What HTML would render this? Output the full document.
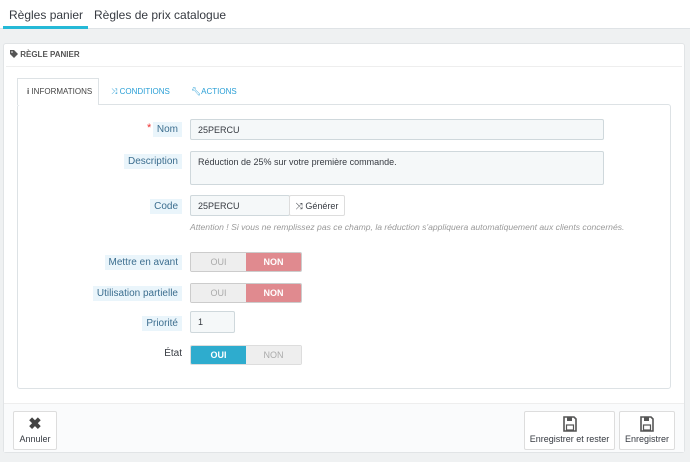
<!DOCTYPE html><html><head><meta charset="utf-8"><style>
*{box-sizing:border-box;margin:0;padding:0}
body{width:690px;height:462px;background:#eff1f2;font-family:"Liberation Sans",sans-serif;position:relative;overflow:hidden;color:#363a41}
.a{position:absolute}
.top{left:0;top:0;width:690px;height:29px;background:#fff;border-bottom:1px solid #dfe3e6}
.lbl{position:absolute;right:508px;font-size:10px;color:#3c6e8f;background:#eaf5fb;padding:2px 4px;white-space:nowrap}
.inp{position:absolute;background:#f5f8f9;border:1px solid #cfd8dc;border-radius:2px;font-size:9px;padding:5px 7px;color:#363a41}
.sw{position:absolute;left:190px;width:112px;height:20px;border:1px solid #ccc;border-radius:2px;display:flex;font-size:9px;overflow:hidden}
.sw span{flex:1;display:flex;align-items:center;justify-content:center}
.off{background:#eee;color:#aaa}
.non{background:#e08a8f;color:#fff;font-weight:bold}
.oui{background:#2eacce;color:#fff;font-weight:bold}
.btn{position:absolute;background:#fff;border:1px solid #ddd;border-radius:2px;font-size:9px;color:#363a41;text-align:center}
</style></head><body>
<div class="a top"></div>
<div class="a" style="left:9px;top:8px;font-size:12px">Règles panier</div>
<div class="a" style="left:3px;top:26px;width:85px;height:3px;background:#25b9d7"></div>
<div class="a" style="left:94px;top:8px;font-size:12px">Règles de prix catalogue</div>
<div class="a" style="left:3px;top:43px;width:682px;height:410px;background:#fff;border:1px solid #e1e4e6;border-radius:3px"></div>
<div class="a" style="left:10px;top:50px;font-size:8px;font-weight:bold;color:#555"><svg width="8" height="8" viewBox="0 0 8 8" style="vertical-align:-1px"><path d="M0 0h4l4 4-4 4-4-4z" fill="#555"/><circle cx="2" cy="2" r="0.8" fill="#fff"/></svg> RÈGLE PANIER</div>
<div class="a" style="left:6px;top:66px;width:676px;height:1px;background:#eee"></div>
<div class="a" style="left:17px;top:104px;width:654px;height:285px;border:1px solid #dde2e5;border-radius:3px"></div>
<div class="a" style="left:17px;top:78px;width:82px;height:27px;background:#fff;border:1px solid #dde2e5;border-bottom:none"></div>
<div class="a" style="left:27px;top:87px;font-size:8px;color:#444"><b>i</b> INFORMATIONS</div>
<div class="a" style="left:111px;top:87px;font-size:8px;color:#2a9fd6">⤨ CONDITIONS</div>
<div class="a" style="left:191px;top:87px;font-size:8px;color:#2a9fd6">🔧︎ACTIONS</div>
<div class="a" style="left:147px;top:122px;color:#e33;font-size:11px">*</div>
<div class="lbl" style="top:122px">Nom</div>
<div class="inp" style="left:190px;top:119px;width:414px;height:21px">25PERCU</div>
<div class="lbl" style="top:154px">Description</div>
<div class="inp" style="left:190px;top:151px;width:414px;height:34px">Réduction de 25% sur votre première commande.</div>
<div class="lbl" style="top:199px">Code</div>
<div class="inp" style="left:190px;top:195px;width:100px;height:21px">25PERCU</div>
<div class="btn" style="left:289px;top:195px;width:56px;height:21px;padding-top:5px">⤨ Générer</div>
<div class="a" style="left:190px;top:222px;font-size:8.6px;font-style:italic;color:#999;white-space:nowrap">Attention ! Si vous ne remplissez pas ce champ, la réduction s'appliquera automatiquement aux clients concernés.</div>
<div class="lbl" style="top:255px">Mettre en avant</div>
<div class="sw" style="top:252px"><span class="off">OUI</span><span class="non">NON</span></div>
<div class="lbl" style="top:286px">Utilisation partielle</div>
<div class="sw" style="top:283px"><span class="off">OUI</span><span class="non">NON</span></div>
<div class="lbl" style="top:316px">Priorité</div>
<div class="inp" style="left:190px;top:311px;width:45px;height:22px">1</div>
<div class="a" style="right:508px;top:348px;font-size:10px">État</div>
<div class="sw" style="top:345px;border-color:#ddd"><span class="oui">OUI</span><span class="off">NON</span></div>
<div class="a" style="left:4px;top:403px;width:680px;height:1px;background:#eee"></div>
<div class="a" style="left:4px;top:404px;width:680px;height:48px;background:#fafbfc"></div>
<div class="btn" style="left:13px;top:411px;width:44px;height:39px;padding-top:4px"><div style="font-size:16px;font-weight:bold;color:#444;line-height:18px">✖</div>Annuler</div>
<div class="btn" style="left:524px;top:411px;width:91px;height:39px;padding-top:4px"><svg width="14" height="16" viewBox="0 0 14 16"><path d="M1 1h10l2 2v12H1z" fill="none" stroke="#555" stroke-width="1.6"/><rect x="4" y="1" width="5" height="4" fill="#555"/><rect x="3.5" y="9" width="7" height="5" fill="none" stroke="#555" stroke-width="1.2"/></svg><br>Enregistrer et rester</div>
<div class="btn" style="left:619px;top:411px;width:56px;height:39px;padding-top:4px"><svg width="14" height="16" viewBox="0 0 14 16"><path d="M1 1h10l2 2v12H1z" fill="none" stroke="#555" stroke-width="1.6"/><rect x="4" y="1" width="5" height="4" fill="#555"/><rect x="3.5" y="9" width="7" height="5" fill="none" stroke="#555" stroke-width="1.2"/></svg><br>Enregistrer</div>
</body></html>
